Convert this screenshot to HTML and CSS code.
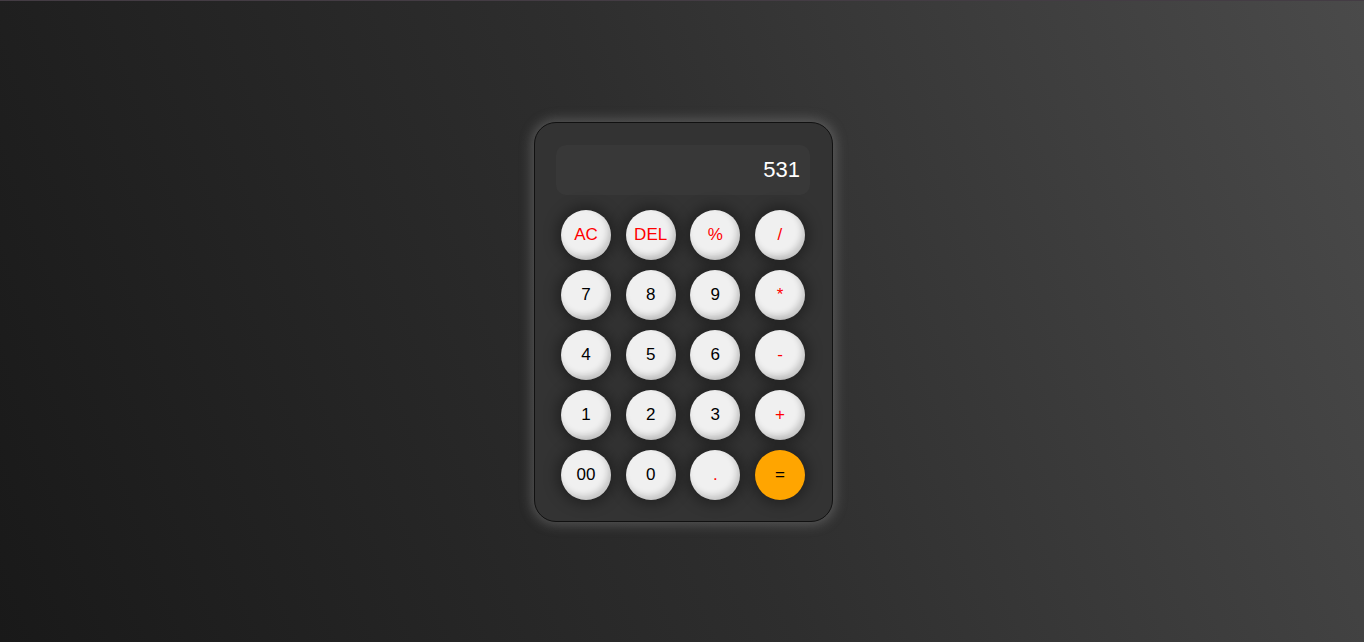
FILE: index.html
```html
<!DOCTYPE html>
<html>
<head>
<meta charset="utf-8">
<link rel="stylesheet" href="styles.css">
</head>
<body>
<div class="calc">
  <div class="display">531</div>
  <div class="keys">
    <button class="key op">AC</button>
    <button class="key op">DEL</button>
    <button class="key op">%</button>
    <button class="key op">/</button>
    <button class="key">7</button>
    <button class="key">8</button>
    <button class="key">9</button>
    <button class="key op">*</button>
    <button class="key">4</button>
    <button class="key">5</button>
    <button class="key">6</button>
    <button class="key op">-</button>
    <button class="key">1</button>
    <button class="key">2</button>
    <button class="key">3</button>
    <button class="key op">+</button>
    <button class="key">00</button>
    <button class="key">0</button>
    <button class="key op">.</button>
    <button class="key eq">=</button>
  </div>
</div>
</body>
</html>
```
FILE: styles.css
```css
html, body {
  margin: 0;
  height: 100%;
}
body {
  background: linear-gradient(70deg, #191919 0%, #2e2e2e 50%, #4a4a4a 100%);
  border-top: 1px solid #443c44;
  box-sizing: border-box;
  font-family: "Liberation Sans", Arial, sans-serif;
  display: flex;
  justify-content: center;
  padding-top: 121px;
}
.calc {
  box-sizing: border-box;
  width: 299px;
  height: 400px;
  margin-left: 3px;
  background: #333333;
  border: 1px solid #111;
  border-radius: 22px;
  box-shadow: 0 0 12px 3px rgba(160, 160, 160, 0.35);
  padding: 22px 22px 0 21px;
}
.display {
  box-sizing: border-box;
  height: 50px;
  width: 254px;
  background: #383838;
  border-radius: 10px;
  color: #fff;
  font-size: 22px;
  line-height: 50px;
  text-align: right;
  padding-right: 10px;
}
.keys {
  margin: 15px 0 0 5px;
  width: 244px;
  display: grid;
  grid-template-columns: repeat(4, 50px);
  justify-content: space-between;
  row-gap: 10px;
}
.key {
  width: 50px;
  height: 50px;
  border-radius: 50%;
  border: none;
  padding: 0;
  background: #f0f0f0;
  color: #000;
  font-family: "Liberation Sans", Arial, sans-serif;
  font-size: 17px;
  box-shadow: inset -3px -4px 6px rgba(0, 0, 0, 0.18), 0 0 14px 4px rgba(0, 0, 0, 0.35);
}
.key.op {
  color: #ff0000;
}
.key.eq {
  background: #ffa500;
  box-shadow: 0 0 14px 4px rgba(0, 0, 0, 0.35);
}
```
